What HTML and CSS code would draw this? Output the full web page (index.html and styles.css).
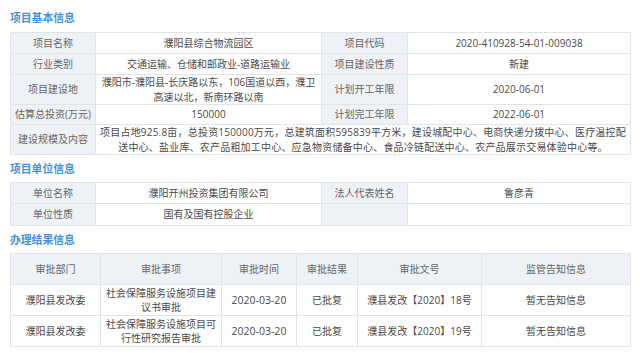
FILE: index.html
```html
<!DOCTYPE html>
<html lang="zh">
<head>
<meta charset="utf-8">
<link rel="stylesheet" href="styles.css">
</head>
<body>
<div class="page">
  <h2 class="sec-title first">项目基本信息</h2>
  <table class="info">
    <colgroup><col class="c-l"><col class="c-v"><col class="c-l2"><col class="c-v2"></colgroup>
    <tr><td class="lab">项目名称</td><td>濮阳县综合物流园区</td><td class="lab">项目代码</td><td>2020-410928-54-01-009038</td></tr>
    <tr><td class="lab">行业类别</td><td>交通运输、仓储和邮政业-道路运输业</td><td class="lab">项目建设性质</td><td>新建</td></tr>
    <tr><td class="lab">项目建设地</td><td>濮阳市-濮阳县-长庆路以东，106国道以西，濮卫高速以北，新南环路以南</td><td class="lab">计划开工年限</td><td>2020-06-01</td></tr>
    <tr class="short"><td class="lab">估算总投资(万元)</td><td>150000</td><td class="lab">计划完工年限</td><td>2022-06-01</td></tr>
    <tr><td class="lab">建设规模及内容</td><td colspan="3" class="wide">项目占地925.8亩，总投资150000万元，总建筑面积595839平方米，建设城配中心、电商快递分拨中心、医疗温控配送中心、盐业库、农产品粗加工中心、应急物资储备中心、食品冷链配送中心、农产品展示交易体验中心等。</td></tr>
  </table>

  <h2 class="sec-title">项目单位信息</h2>
  <table class="info">
    <colgroup><col class="c-l"><col class="c-v"><col class="c-l2"><col class="c-v2"></colgroup>
    <tr><td class="lab">单位名称</td><td>濮阳开州投资集团有限公司</td><td class="lab">法人代表姓名</td><td>鲁彦青</td></tr>
    <tr class="tall"><td class="lab">单位性质</td><td>国有及国有控股企业</td><td class="lab"></td><td></td></tr>
  </table>

  <h2 class="sec-title">办理结果信息</h2>
  <table class="info result">
    <colgroup><col class="r1"><col class="r2"><col class="r3"><col class="r4"><col class="r5"><col class="r6"></colgroup>
    <tr class="head"><td>审批部门</td><td>审批事项</td><td>审批时间</td><td>审批结果</td><td>审批文号</td><td>监管告知信息</td></tr>
    <tr><td>濮阳县发改委</td><td>社会保障服务设施项目建议书审批</td><td class="num">2020-03-20</td><td>已批复</td><td>濮县发改【2020】18号</td><td>暂无告知信息</td></tr>
    <tr><td>濮阳县发改委</td><td>社会保障服务设施项目可行性研究报告审批</td><td class="num">2020-03-20</td><td>已批复</td><td>濮县发改【2020】19号</td><td>暂无告知信息</td></tr>
  </table>
</div>
</body>
</html>
```

FILE: styles.css
```css
html, body {
  margin: 0;
  padding: 0;
  background: #ffffff;
}
body {
  font-family: "Open Sans", "Noto Sans CJK SC", sans-serif;
  font-size: 10px;
  color: #555;
}
.page {
  padding: 0 10px;
  width: 620px;
}
.sec-title {
  margin: 0;
  font-family: "Noto Sans CJK SC", sans-serif;
  font-size: 10.8px;
  font-weight: bold;
  color: #4393dc;
  line-height: 14px;
  padding: 6px 0 7px 0;
}
.sec-title.first {
  padding-top: 10px;
  padding-bottom: 8px;
}
.info {
  width: 620px;
  border-collapse: collapse;
  table-layout: fixed;
  border: 1px solid #dde2e8;
}
.info td {
  border: 1px solid #e1e5ea;
  text-align: center;
  vertical-align: middle;
  line-height: 14.5px;
  padding: 0 1px;
  height: 20px;
  color: #4a4a4a;
}
.info td.wide {
  letter-spacing: 0.2px;
  padding: 0 2px;
}
.info td.lab {
  background: #eef1f5;
  color: #666;
}
.info tr.short td {
  height: 19px;
}
.info tr.tall td {
  height: 21px;
}
.c-l { width: 85px; }
.c-v { width: 226px; }
.c-l2 { width: 86px; }
.c-v2 { width: 223px; }

.result td {
  height: 30px;
  padding: 0 3px;
}
.result tr.head td {
  background: #eef1f5;
  color: #666;
}
.result td.num {
  font-size: 10.5px;
}
.r1 { width: 90px; }
.r2 { width: 121px; }
.r3 { width: 75px; }
.r4 { width: 61px; }
.r5 { width: 124px; }
.r6 { width: 149px; }
```
